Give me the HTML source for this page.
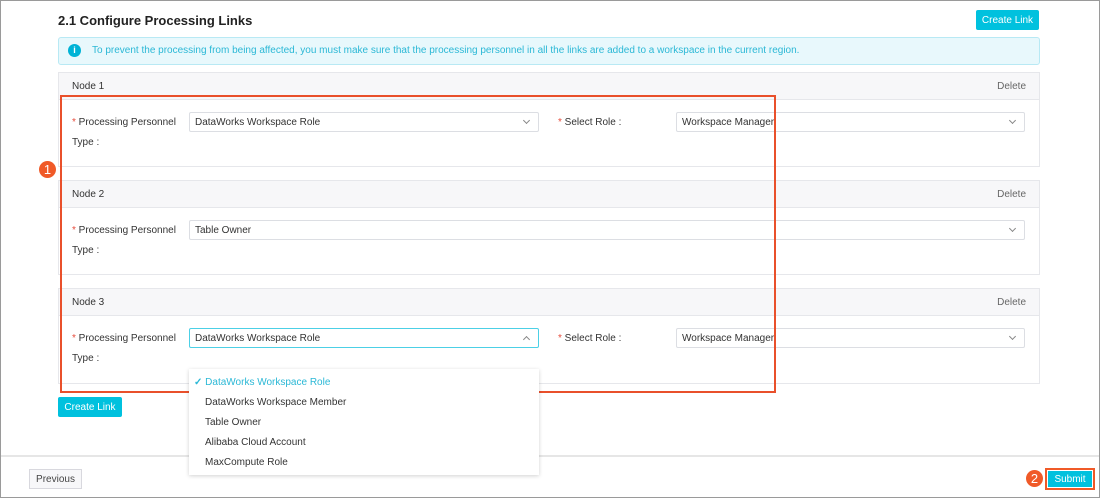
<!DOCTYPE html>
<html><head><meta charset="utf-8"><style>
*{box-sizing:border-box;margin:0;padding:0}
body{width:1100px;height:498px;position:relative;overflow:hidden;background:#fff;font-family:"Liberation Sans",sans-serif;font-size:10px;color:#333}
.a{position:absolute}
.frame{left:0;top:0;width:1100px;height:498px;border:1px solid #9a9a9a}
.btn{background:#00c1de;color:#fff;font-size:10px;display:flex;align-items:center;justify-content:center;border-radius:2px}
.panel{left:58px;width:982px;border:1px solid #e6e7eb}
.ph{position:absolute;left:0;top:0;right:0;height:27px;background:#f7f7f9;border-bottom:1px solid #e6e7eb}
.ph span{position:absolute;left:13px;top:8px}
.ph b{position:absolute;right:13px;top:8px;font-weight:normal;color:#666}
.sel{height:20px;border:1px solid #dcdee3;border-radius:2px;padding:0 5px;font-size:10px;display:flex;align-items:center}
.chev{position:absolute;right:9px;top:5px;width:5px;height:5px;border-right:1px solid #888;border-bottom:1px solid #888;transform:rotate(45deg)}
.chev.up{transform:rotate(-135deg);top:8px}
.lbl{font-size:10px;color:#333}
.req{color:#e74c3c}
.circ{width:17px;height:17px;border-radius:50%;background:#f05a28;color:#fff;text-align:center;font-size:13px;line-height:17px}
.dd div{height:20px;padding:5px 16px;font-size:10px}
</style></head><body>
<div class="a frame"></div>
<div class="a" style="left:58px;top:13px;font-size:13px;font-weight:bold;color:#222">2.1 Configure Processing Links</div>
<div class="a btn" style="left:976px;top:10px;width:63px;height:20px">Create Link</div>
<div class="a" style="left:58px;top:37px;width:982px;height:28px;background:#e8f8fc;border:1px solid #b8e9f4;border-radius:3px"></div>
<div class="a" style="left:68px;top:44px;width:13px;height:13px;border-radius:50%;background:#00b3d6;color:#fff;font-size:9px;font-weight:bold;text-align:center;line-height:13px">i</div>
<div class="a" style="left:92px;top:45px;color:#2bb8d6;font-size:10px">To prevent the processing from being affected, you must make sure that the processing personnel in all the links are added to a workspace in the current region.</div>

<div class="a panel" style="top:72px;height:95px"><div class="ph"><span>Node 1</span><b>Delete</b></div></div>
<div class="a panel" style="top:180px;height:95px"><div class="ph"><span>Node 2</span><b>Delete</b></div></div>
<div class="a panel" style="top:288px;height:96px"><div class="ph"><span>Node 3</span><b>Delete</b></div></div>

<div class="a lbl" style="left:72px;top:117px"><span class="req">*</span> Processing Personnel</div>
<div class="a lbl" style="left:72px;top:137px">Type :</div>
<div class="a sel" style="left:189px;top:112px;width:350px">DataWorks Workspace Role<i class="chev"></i></div>
<div class="a lbl" style="left:558px;top:117px"><span class="req">*</span> Select Role :</div>
<div class="a sel" style="left:676px;top:112px;width:349px">Workspace Manager<i class="chev"></i></div>

<div class="a lbl" style="left:72px;top:225px"><span class="req">*</span> Processing Personnel</div>
<div class="a lbl" style="left:72px;top:245px">Type :</div>
<div class="a sel" style="left:189px;top:220px;width:836px">Table Owner<i class="chev"></i></div>

<div class="a lbl" style="left:72px;top:333px"><span class="req">*</span> Processing Personnel</div>
<div class="a lbl" style="left:72px;top:353px">Type :</div>
<div class="a sel" style="left:189px;top:328px;width:350px;border-color:#4cd0e6">DataWorks Workspace Role<i class="chev up"></i></div>
<div class="a lbl" style="left:558px;top:333px"><span class="req">*</span> Select Role :</div>
<div class="a sel" style="left:676px;top:328px;width:349px">Workspace Manager<i class="chev"></i></div>

<div class="a btn" style="left:58px;top:397px;width:64px;height:20px">Create Link</div>

<div class="a" style="left:1px;top:455px;width:1098px;height:2px;background:#e6e6e6"></div>
<div class="a" style="left:29px;top:469px;width:53px;height:20px;border:1px solid #d8d8de;background:#f7f7f9;display:flex;align-items:center;justify-content:center;color:#444">Previous</div>
<div class="a" style="left:1045px;top:468px;width:50px;height:22px;border:2px solid #f05a28"></div>
<div class="a btn" style="left:1048px;top:471px;width:44px;height:16px;border-radius:0">Submit</div>
<div class="a circ" style="left:1026px;top:470px">2</div>

<div class="a" style="left:60px;top:95px;width:716px;height:298px;border:2px solid #e9502b"></div>
<div class="a circ" style="left:39px;top:161px">1</div>

<div class="a dd" style="left:189px;top:369px;width:350px;height:106px;background:#fff;box-shadow:0 1px 4px rgba(0,0,0,.18);padding-top:3px">
<div style="color:#2bb8d6;padding-left:5px"><span style="font-weight:bold">✓</span> DataWorks Workspace Role</div>
<div>DataWorks Workspace Member</div>
<div>Table Owner</div>
<div>Alibaba Cloud Account</div>
<div>MaxCompute Role</div>
</div>
</body></html>
